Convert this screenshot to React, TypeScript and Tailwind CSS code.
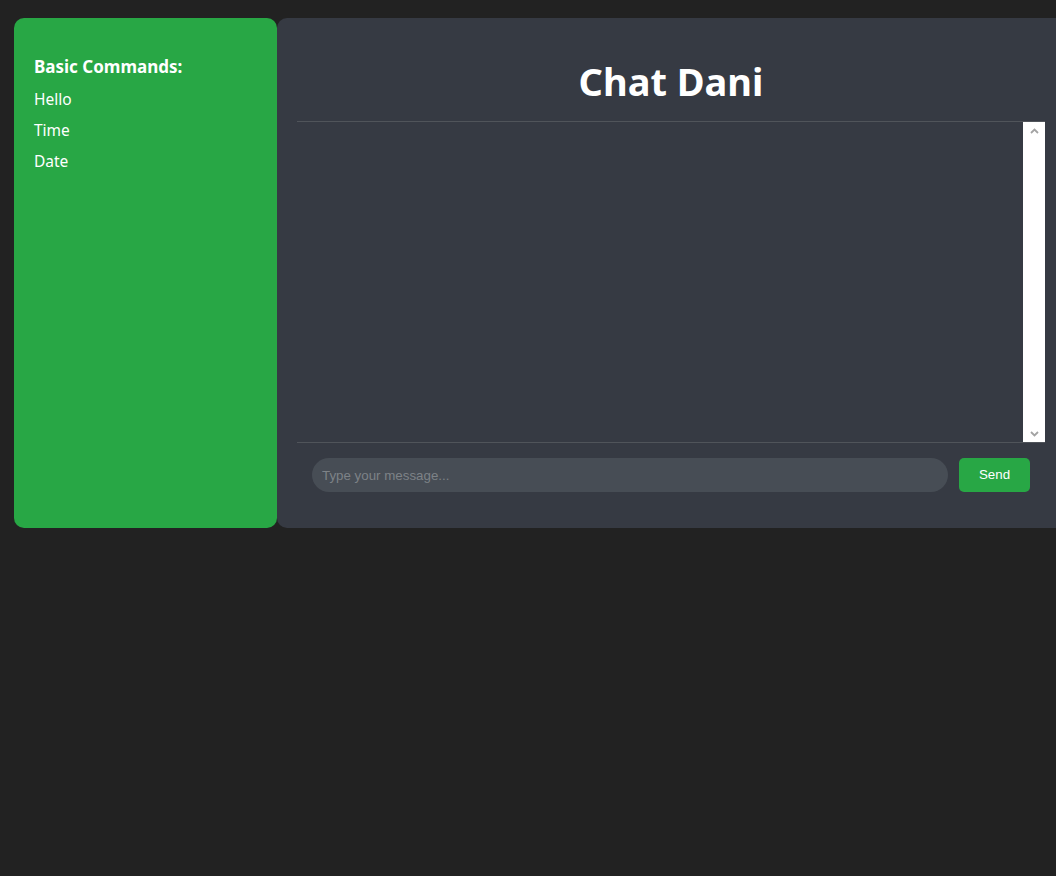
import * as React from "react"

const commands = ["Hello", "Time", "Date"]

function ScrollArrow({ dir }: { dir: "up" | "down" }) {
  return (
    <svg width="9" height="6" viewBox="0 0 9 6" className="text-[#a3a3a3]">
      <path
        d={dir === "up" ? "M1 5 L4.5 1.5 L8 5" : "M1 1 L4.5 4.5 L8 1"}
        fill="none"
        stroke="currentColor"
        strokeWidth="1.8"
      />
    </svg>
  )
}

export default function App() {
  const [message, setMessage] = React.useState("")

  return (
    <div className="h-screen w-full overflow-hidden bg-[#222222] font-['Noto_Sans',sans-serif]">
      <div className="flex w-[1100px] pl-[14px] pt-[18px]">
        {/* sidebar */}
        <aside className="h-[510px] w-[263px] shrink-0 rounded-[10px] bg-[#28a745] px-5 pt-[37px] text-white">
          <h3 className="text-[17px] font-bold leading-[24px]">Basic Commands:</h3>
          <ul className="mt-[8px] flex flex-col gap-[7px]">
            {commands.map((c) => (
              <li key={c} className="text-[15.5px] leading-[24px]">
                {c}
              </li>
            ))}
          </ul>
        </aside>

        {/* chat */}
        <main className="flex h-[510px] w-[788px] shrink-0 flex-col rounded-[10px] bg-[#363a43] px-5 pb-5 pt-5">
          <h1 className="mb-[16px] mt-[19px] text-center text-[38px] font-bold leading-[48px] text-white">
            Chat Dani
          </h1>
          <div className="flex h-[322px] border-y border-[#50545a]">
            <div className="flex-1" />
            <div className="flex w-[22px] flex-col items-center justify-between bg-white pb-[5px] pt-[6px]">
              <ScrollArrow dir="up" />
              <ScrollArrow dir="down" />
            </div>
          </div>
          <form
            className="flex gap-[11px] p-[15px] font-['Liberation_Sans',Arial,sans-serif]"
            onSubmit={(e) => {
              e.preventDefault()
              setMessage("")
            }}
          >
            <input
              value={message}
              onChange={(e) => setMessage(e.target.value)}
              placeholder="Type your message..."
              className="h-[34px] flex-1 rounded-full bg-[#474d55] px-[10px] text-[13.333px] text-white outline-none placeholder:text-[#7d8287]"
            />
            <button
              type="submit"
              className="h-[34px] w-[71px] rounded-[5px] bg-[#28a745] text-[13.333px] font-medium text-white"
            >
              Send
            </button>
          </form>
        </main>
      </div>
    </div>
  )
}
